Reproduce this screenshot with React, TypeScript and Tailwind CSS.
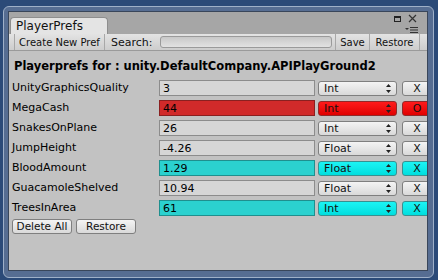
import React from "react";

type Pref = {
  name: string;
  value: string;
  type: "Int" | "Float";
  state?: "changed" | "new";
};

const prefs: Pref[] = [
  { name: "UnityGraphicsQuality", value: "3", type: "Int" },
  { name: "MegaCash", value: "44", type: "Int", state: "changed" },
  { name: "SnakesOnPlane", value: "26", type: "Int" },
  { name: "JumpHeight", value: "-4.26", type: "Float" },
  { name: "BloodAmount", value: "1.29", type: "Float", state: "new" },
  { name: "GuacamoleShelved", value: "10.94", type: "Float" },
  { name: "TreesInArea", value: "61", type: "Int", state: "new" },
];

const fieldClass = {
  none: "bg-[#d6d6d6] border-[#8c8c8c]",
  changed: "bg-[#d12a2a] border-[#8a2020]",
  new: "bg-[#2bd1cf] border-[#1f8f8e]",
};

const dropClass = {
  none: "bg-gradient-to-b from-[#f4f4f4] to-[#d9d9d9] border-[#7f7f7f]",
  changed: "bg-gradient-to-b from-[#ff1a1a] to-[#e00000] border-[#8f2a2a]",
  new: "bg-gradient-to-b from-[#1af4f4] to-[#00dede] border-[#3a8f8f]",
};

function Arrows() {
  return (
    <svg width="5" height="9" viewBox="0 0 5 9" className="shrink-0">
      <path d="M2.5 0 L5 3 L0 3 Z M0 6 L5 6 L2.5 9 Z" fill="#222" />
    </svg>
  );
}

function Row({ pref }: { pref: Pref }) {
  const s = pref.state ?? "none";
  return (
    <div className="flex items-center h-[20px]">
      <div className="w-[150px] shrink-0 pl-[3px] text-black whitespace-nowrap">{pref.name}</div>
      <div
        className={`w-[156px] shrink-0 h-[16px] border ${fieldClass[s]} flex items-center pl-[3px] leading-none text-black`}
      >
        {pref.value}
      </div>
      <div
        className={`ml-[3px] w-[79px] shrink-0 h-[15px] border rounded-[3px] ${dropClass[s]} flex items-center justify-between pl-[5px] pr-[5px] leading-none`}
      >
        <span>{pref.type}</span>
        <Arrows />
      </div>
      <div
        className={`ml-[5px] w-[30px] h-[15px] border rounded-[3px] ${dropClass[s]} flex items-center justify-center leading-none shrink-0`}
      >
        {pref.state === "changed" ? "O" : "X"}
      </div>
    </div>
  );
}

export default function App() {
  return (
    <div
      className="w-[438px] h-[280px] bg-[#2b4a78] overflow-hidden text-[11px] text-[#111]"
      style={{ fontFamily: '"DejaVu Sans", sans-serif' }}
    >
      <div className="ml-[3px] mt-[6px] w-[431px] h-[272px] rounded-[6px] border border-[#9fb0c8] bg-[#566d92] p-[4px] pr-[5px] pb-[6px]">
        <div className="w-full h-full flex flex-col border border-[#39465a] overflow-hidden">
          {/* title strip */}
          <div className="h-[22px] bg-[#a6a6a6] flex items-end relative shrink-0">
            <div className="ml-[1px] w-[98px] h-[17px] bg-[#e4e4e4] rounded-t-[4px] border border-b-0 border-[#8e8e8e] flex items-center pl-[5px] text-[12px] leading-none text-[#111]">
              PlayerPrefs
            </div>
            <svg width="7" height="6" viewBox="0 0 7 6" className="absolute left-[385px] top-[4px]">
              <rect x="0.5" y="0.5" width="6" height="5" fill="none" stroke="#222" />
              <rect x="0.5" y="0.5" width="6" height="1.5" fill="#222" />
            </svg>
            <svg width="9" height="9" viewBox="0 0 9 9" className="absolute left-[399px] top-[2px]">
              <path d="M1 1 L8 8 M8 1 L1 8" stroke="#333" strokeWidth="1.2" />
            </svg>
            <svg width="13" height="6" viewBox="0 0 13 6" className="absolute left-[396px] top-[15px]">
              <path d="M0 1 L4 1 L2 3 Z" fill="#333" />
              <path d="M5 0.5 H13 M5 3 H13 M5 5.5 H13" stroke="#333" strokeWidth="1" />
            </svg>
          </div>

          {/* toolbar */}
          <div className="h-[17px] shrink-0 bg-gradient-to-b from-[#e3e3e3] to-[#cdcdcd] border-b border-[#9a9a9a] flex items-stretch text-[10px] leading-none whitespace-nowrap">
            <div className="ml-[5px] shrink-0 w-[91px] pt-[1px] border-l border-r border-[#a8a8a8] flex items-center justify-center">
              Create New Pref
            </div>
            <div className="w-[55px] shrink-0 pl-[6px] pt-[1px] flex items-center text-[11px]">Search:</div>
            <div className="flex items-center shrink-0">
              <div className="w-[172px] h-[12px] rounded-[3px] border border-[#9a9a9a] bg-gradient-to-b from-[#c8c8c8] to-[#e2e2e2]" />
            </div>
            <div className="ml-[3px] shrink-0 w-[35px] pt-[1px] border-l border-r border-[#a8a8a8] flex items-center justify-center">Save</div>
            <div className="shrink-0 w-[50px] pt-[1px] border-r border-[#a8a8a8] flex items-center justify-center">Restore</div>
          </div>

          {/* content */}
          <div className="flex-1 bg-[#c2c2c2] pt-[8px]">
            <div className="pl-[5px] font-bold text-[11.5px] h-[14px] leading-[14px] text-black whitespace-nowrap">
              Playerprefs for : unity.DefaultCompany.APIPlayGround2
            </div>
            <div className="mt-[5px] flex flex-col w-[460px]">
              {prefs.map((p) => (
                <Row key={p.name} pref={p} />
              ))}
            </div>
            <div className="flex gap-[4px] pl-[3px] mt-[1px] text-[10.5px]">
              <div className="w-[60px] h-[15px] rounded-[3px] border border-[#7f7f7f] bg-gradient-to-b from-[#f4f4f4] to-[#d9d9d9] flex items-center justify-center leading-none">
                Delete All
              </div>
              <div className="w-[60px] h-[15px] rounded-[3px] border border-[#7f7f7f] bg-gradient-to-b from-[#f4f4f4] to-[#d9d9d9] flex items-center justify-center leading-none">
                Restore
              </div>
            </div>
          </div>
        </div>
      </div>
    </div>
  );
}
